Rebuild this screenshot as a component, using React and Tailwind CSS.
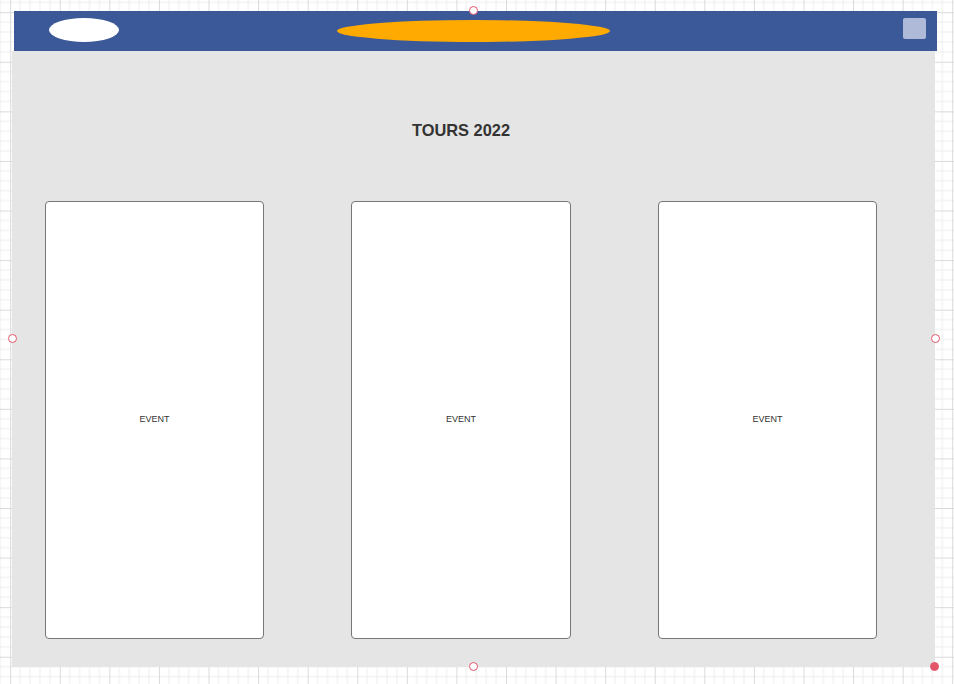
import React from "react";

function GridBackdrop() {
  const minor = 49.58 / 5;
  return (
    <svg className="absolute inset-0" width="954" height="684">
      <defs>
        <pattern
          id="grid"
          x="10.2"
          y="12.2"
          width="49.58"
          height="49.58"
          patternUnits="userSpaceOnUse"
        >
          {[1, 2, 3, 4].map((i) => (
            <g key={i} stroke="#ededed" strokeWidth="1">
              <line x1={i * minor} y1="0" x2={i * minor} y2="49.58" />
              <line x1="0" y1={i * minor} x2="49.58" y2={i * minor} />
            </g>
          ))}
          <line x1="0.5" y1="0" x2="0.5" y2="49.58" stroke="#dadada" />
          <line x1="0" y1="0.5" x2="49.58" y2="0.5" stroke="#dadada" />
        </pattern>
      </defs>
      <rect width="954" height="684" fill="#ffffff" />
      <rect width="954" height="684" fill="url(#grid)" />
    </svg>
  );
}

function Handle({ className, filled }) {
  return (
    <div
      className={
        "absolute w-[9px] h-[9px] rounded-full border-[1.5px] border-[#e2566a] " +
        (filled ? "bg-[#e2566a] " : "bg-white ") +
        className
      }
    />
  );
}

function EventCard({ className = "" }) {
  return (
    <div
      className={
        "w-[219px] h-[438px] bg-white border border-[#777777] rounded-[4px] flex items-center justify-center " +
        className
      }
    >
      <span className="text-[9px] text-[#333333]">EVENT</span>
    </div>
  );
}

export default function App() {
  return (
    <div
      className="relative w-[954px] h-[684px] overflow-hidden"
      style={{ fontFamily: '"Liberation Sans", Arial, sans-serif' }}
    >
      <GridBackdrop />

      <div className="relative pt-[11px] pl-[12px]">
        {/* top bar */}
        <div className="ml-[2px] w-[923px] h-[40px] bg-[#3b5998] flex items-start pl-[35px]">
          <div className="mt-[7px] w-[70px] h-[24px] rounded-[50%] bg-white" />
          <div className="mt-[9px] ml-[218px] w-[273px] h-[22px] rounded-[50%] bg-[#ffaa00]" />
          <div className="mt-[7px] ml-auto mr-[11px] w-[23px] h-[21px] rounded-[2px] bg-[#aebad7]" />
        </div>

        {/* page body */}
        <div className="w-[923px] h-[616px] bg-[#e5e5e5] pl-[33px]">
          <div className="w-fit flex flex-col items-center">
            <h1 className="mt-[69px] text-[16.4px] leading-[20px] font-bold text-[#333333]">
              TOURS 2022
            </h1>
            <div className="mt-[61px] flex">
              <EventCard />
              <EventCard className="ml-[87px] w-[220px]" />
              <EventCard className="ml-[87px]" />
            </div>
          </div>
        </div>
      </div>

      {/* selection handles */}
      <Handle className="left-[469px] top-[6px]" />
      <Handle className="left-[8px] top-[334px]" />
      <Handle className="left-[931px] top-[334px]" />
      <Handle className="left-[469px] top-[662px]" />
      <Handle className="left-[930px] top-[662px]" filled />
    </div>
  );
}
